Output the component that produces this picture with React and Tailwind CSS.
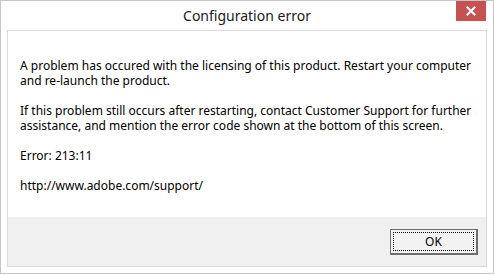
import React from 'react';

const FONT = { fontFamily: '"Segoe UI", "Noto Sans", "Open Sans", sans-serif' };

function CloseButton() {
  return (
    <div className="w-[30px] h-[20px] bg-[#c75050] flex items-center justify-center">
      <svg width="10" height="10" viewBox="0 0 10 10">
        <path d="M1.5 1.5 L8.5 8.5 M8.5 1.5 L1.5 8.5" stroke="#ffffff" strokeWidth="2" strokeLinecap="square" />
      </svg>
    </div>
  );
}

export default function App() {
  return (
    <div className="w-[494px] h-[275px] bg-white" style={FONT}>
      <div className="w-[494px] h-[274px] border border-[#c6c6c6] flex flex-col">
        {/* title bar */}
        <div className="h-[29px] relative flex items-center justify-center shrink-0">
          <span className="text-[14px] text-[#1a1a1a] leading-none">Configuration error</span>
          <div className="absolute right-[7px] top-0">
            <CloseButton />
          </div>
        </div>

        {/* client frame */}
        <div className="mx-[6px] mb-[6px] flex-1 border border-[#dadada] flex flex-col">
          <div className="flex-1 bg-white pl-[12px] pr-[10px] pt-[27px] text-[12px] leading-[15px] text-black">
            <p>A problem has occured with the licensing of this product. Restart your computer and re-launch the product.</p>
            <p className="mt-[15px]">If this problem still occurs after restarting, contact Customer Support for further assistance, and mention the error code shown at the bottom of this screen.</p>
            <p className="mt-[15px]">Error: 213:11</p>
            <p className="mt-[15px]">http://www.adobe.com/support/</p>
          </div>
          <div className="h-[49px] bg-[#f0f0f0] flex items-start justify-end pt-[12px] pr-[8px] shrink-0">
            <button className="w-[88px] h-[26px] border border-[#6e6e6e] border-r-2 border-b-2 bg-[#f2f2f2] p-[2px] flex">
              <span className="flex-1 border border-dotted border-black flex items-center justify-center text-[12px] text-black">OK</span>
            </button>
          </div>
        </div>
      </div>
    </div>
  );
}
